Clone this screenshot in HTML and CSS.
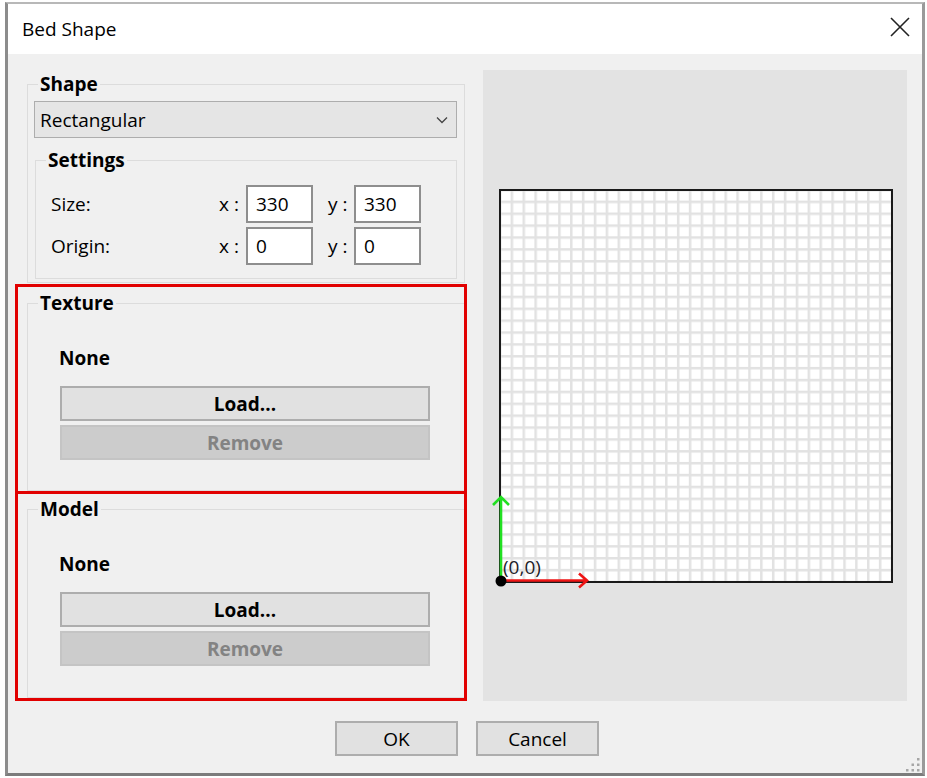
FILE: index.html
```html
<!DOCTYPE html>
<html lang="en">
<head>
<meta charset="utf-8">
<title>Bed Shape</title>
<link rel="stylesheet" href="styles.css">
</head>
<body>
<div class="window">
  <div class="titlebar">
    <span class="title">Bed Shape</span>
    <svg class="close" width="20" height="20" viewBox="0 0 20 20" aria-label="Close">
      <path d="M1 1 L19 19 M19 1 L1 19" stroke="#222" stroke-width="1.6" fill="none"/>
    </svg>
  </div>
  <div class="content">
    <div class="main">
      <div class="left">
        <fieldset class="group shape">
          <legend>Shape</legend>
          <div class="shape-body">
            <div class="combo">
              <span>Rectangular</span>
              <svg width="12" height="8" viewBox="0 0 12 8"><path d="M1 1.5 L6 6.5 L11 1.5" stroke="#444" stroke-width="1.3" fill="none"/></svg>
            </div>
            <fieldset class="group settings">
              <legend>Settings</legend>
              <div class="settings-body">
                <div class="row">
                  <span class="row-label">Size:</span>
                  <span class="axis">x :</span>
                  <span class="field">330</span>
                  <span class="axis axis-y">y :</span>
                  <span class="field">330</span>
                </div>
                <div class="row">
                  <span class="row-label">Origin:</span>
                  <span class="axis">x :</span>
                  <span class="field">0</span>
                  <span class="axis axis-y">y :</span>
                  <span class="field">0</span>
                </div>
              </div>
            </fieldset>
          </div>
        </fieldset>

        <div class="highlight highlight-texture">
          <fieldset class="group">
            <legend>Texture</legend>
            <div class="file-body">
              <div class="none">None</div>
              <button class="btn btn-wide">Load...</button>
              <button class="btn btn-wide btn-disabled">Remove</button>
            </div>
          </fieldset>
        </div>

        <div class="highlight highlight-model">
          <fieldset class="group">
            <legend>Model</legend>
            <div class="file-body">
              <div class="none">None</div>
              <button class="btn btn-wide">Load...</button>
              <button class="btn btn-wide btn-disabled">Remove</button>
            </div>
          </fieldset>
        </div>
      </div>

      <div class="preview">
        <svg class="bed" width="392" height="392" viewBox="0 0 392 392">
          <defs>
            <pattern id="grid" width="11.8788" height="11.8788" patternUnits="userSpaceOnUse" patternTransform="translate(-1.25 -1.25)">
              <rect width="11.8788" height="11.8788" fill="#ffffff"/>
              <rect width="2.5" height="11.8788" fill="#e2e2e2"/>
              <rect width="11.8788" height="2.5" fill="#e2e2e2"/>
            </pattern>
          </defs>
          <rect x="0" y="0" width="392" height="392" fill="url(#grid)"/>
          <rect x="0" y="0" width="392" height="392" fill="none" stroke="#1a1a1a" stroke-width="2"/>
          <path d="M1 391 V308 M-7 315 L1 307 L9 315" stroke="#22e022" stroke-width="2.6" fill="none"/>
          <path d="M1 390.5 H87 M79 383.5 L87 390.5 L79 397.5" stroke="#ee1414" stroke-width="2.6" fill="none"/>
          <circle cx="1" cy="391" r="5.5" fill="#000"/>
          <text x="3" y="384" class="origin-label">(0,0)</text>
        </svg>
      </div>
    </div>

    <div class="footer">
      <button class="btn btn-dialog">OK</button>
      <button class="btn btn-dialog">Cancel</button>
    </div>
  </div>

  <svg class="grip" width="16" height="16" viewBox="0 0 16 16">
    <g fill="#a6a6a6">
      <rect x="12" y="1" width="2.5" height="2.5"/>
      <rect x="6.5" y="6.5" width="2.5" height="2.5"/>
      <rect x="12" y="6.5" width="2.5" height="2.5"/>
      <rect x="1" y="12" width="2.5" height="2.5"/>
      <rect x="6.5" y="12" width="2.5" height="2.5"/>
      <rect x="12" y="12" width="2.5" height="2.5"/>
    </g>
  </svg>
</div>
</body>
</html>
```

FILE: styles.css
```css
html, body {
  margin: 0;
  padding: 0;
  background: #ffffff;
}

body {
  font-family: "Open Sans", "Noto Sans", sans-serif;
  font-size: 19px;
  line-height: 22px;
  color: #000;
}

.window {
  position: relative;
  margin: 2px 0 0 5px;
  width: 920px;
  height: 774px;
  box-sizing: border-box;
  border-top: 2px solid #b8b8b8;
  border-left: 3px solid #8c8c8c;
  border-right: 3px solid #9a9a9a;
  border-bottom: 3px solid #7c7c7c;
  display: flex;
  flex-direction: column;
}

.titlebar {
  height: 50px;
  flex: none;
  background: #ffffff;
  display: flex;
  align-items: center;
  justify-content: space-between;
  padding: 0 12px 0 14px;
}

.title {
  font-size: 19px;
}

.close {
  display: block;
  margin-top: -4px;
}

.content {
  flex: 1;
  background: #f0f0f0;
  padding: 16px 15px 15px 19px;
  display: flex;
  flex-direction: column;
}

.main {
  display: flex;
  gap: 18px;
  height: 631px;
}

.left {
  width: 438px;
  display: flex;
  flex-direction: column;
}

.group {
  margin: 0;
  padding: 0;
  border: 1px solid #dcdcdc;
  min-width: 0;
}

.group > legend {
  margin-left: 10px;
  padding: 0 2px;
  font-weight: 700;
  line-height: 22px;
}

.shape {
  margin-top: 3px;
}

.shape-body {
  padding: 6px 7px 3px 6px;
}

.combo {
  height: 37px;
  box-sizing: border-box;
  border: 1px solid #adadad;
  background: #e5e5e5;
  display: flex;
  align-items: center;
  justify-content: space-between;
  padding: 0 8px 0 5px;
}

.combo svg {
  display: block;
}

.settings {
  margin-top: 11px;
  margin-left: 1px;
}

.settings-body {
  padding: 14px 0 13px 15px;
  display: flex;
  flex-direction: column;
  gap: 4px;
}

.row {
  display: flex;
  align-items: center;
  height: 38px;
}

.row-label {
  width: 168px;
}

.axis {
  width: 27px;
}

.axis-y {
  width: 26px;
  margin-left: 15px;
}

.field {
  width: 67px;
  height: 38px;
  box-sizing: border-box;
  border: 2px solid #8e8e8e;
  background: #ffffff;
  padding-left: 8px;
  display: flex;
  align-items: center;
}

.highlight {
  position: relative;
}

.highlight::after {
  content: "";
  position: absolute;
  right: -2px;
  left: -12px;
  border: 3px solid #e10000;
  pointer-events: none;
}

.highlight-texture {
  margin-top: 9px;
}

.highlight-texture .file-body {
  padding-bottom: 30px;
}

.highlight-texture::after {
  top: -8px;
  bottom: -3px;
}

.highlight-model {
  margin-top: 7px;
}

.highlight-model .file-body {
  padding-bottom: 31px;
}

.highlight-model::after {
  top: -7px;
  bottom: -3px;
}

.file-body {
  padding: 33px 34px 28px 32px;
  display: flex;
  flex-direction: column;
}

.none {
  font-weight: 700;
  margin-left: -1px;
  margin-bottom: 17px;
}

.btn {
  height: 35px;
  box-sizing: border-box;
  border: 2px solid #adadad;
  background: #e1e1e1;
  font-family: inherit;
  font-size: 19px;
  color: #000;
  padding: 0;
  margin: 0;
}

.btn-wide {
  width: 370px;
  font-weight: 700;
}

.btn-wide + .btn-wide {
  margin-top: 4px;
}

.btn-disabled {
  background: #cccccc;
  border-color: #c4c4c4;
  color: #838383;
}

.preview {
  width: 424px;
  background: #e3e3e3;
  display: flex;
  align-items: center;
  justify-content: center;
}

.bed {
  display: block;
  overflow: visible;
  margin-left: 2px;
}

.origin-label {
  font-family: "Open Sans", "Noto Sans", sans-serif;
  font-size: 19px;
  fill: #1e1e2a;
}

.footer {
  margin-top: 20px;
  display: flex;
  justify-content: center;
  gap: 18px;
}

.btn-dialog {
  width: 123px;
  font-weight: 400;
}

.grip {
  position: absolute;
  right: 1px;
  bottom: 0;
}
```
